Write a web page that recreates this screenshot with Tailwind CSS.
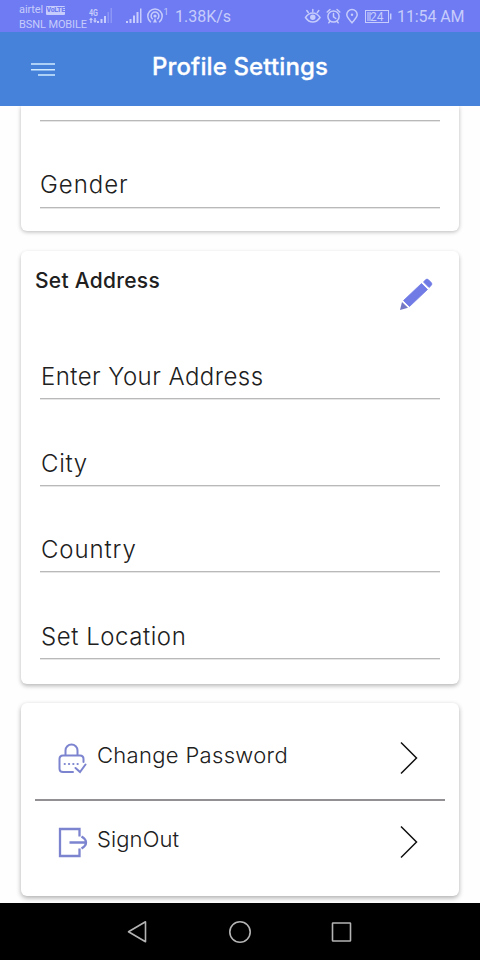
<!DOCTYPE html>
<html lang="en">
<head>
<meta charset="utf-8">
<title>Profile Settings</title>
<script src="https://cdn.jsdelivr.net/npm/@tailwindcss/browser@4"></script>
</head>
<body class="bg-white">
<div class="flex h-[960px] w-[480px] flex-col overflow-hidden bg-[#fefefe] font-['Inter',sans-serif] text-[#202020]">
  <div class="flex h-8 shrink-0 bg-[#6e7bf2] pl-[19px] font-['Roboto',sans-serif] text-[#c6ccfb]">
    <div class="w-[69px] shrink-0 pt-[2px] text-[11px] leading-[15px] whitespace-nowrap">
      <div class="flex items-center gap-[3px] tracking-[-0.1px]">airtel <span class="mt-px flex h-[9px] w-[19px] items-center justify-center rounded-[1px] bg-[#c6ccfb] text-[7px] font-black tracking-[-0.3px] text-[#6e7bf2]">VoLTE</span></div>
      <div class="tracking-[-0.1px]">BSNL MOBILE</div>
    </div>
    <svg class="h-8 w-[82px] shrink-0" viewBox="88 0 82 32" fill="#c6ccfb">
      <text x="89" y="15.500" font-size="9" font-weight="700" textLength="9" lengthAdjust="spacingAndGlyphs">4G</text>
      <path d="M89 20l2-2.500 2 2.500h-1.300v3h-1.400v-3zM93 20.500h1.300v-2.500h1.400v2.500h1.300l-2 2.500zM97 21h2v2h-2zM100.500 19h2v4h-2zM104 16h2v7h-2z"/>
      <path d="M107.500 12h1.500v11h-1.500zM110.500 8h1.500v15h-1.500z" opacity=".35"/>
      <path d="M126 21h2v2h-2zM129.500 19h2v4h-2zM133 15.500h2v7.500h-2zM136.500 12h2v11h-2zM140 8.500h1.500v14.500h-1.500z"/>
      <g fill="none" stroke="#c6ccfb" stroke-width="1.500" stroke-linecap="round"><path d="M150.500 21.800a7.200 7.200 0 1 1 9 0M152.300 18.800a3.900 3.900 0 1 1 5.400 0"/></g>
      <circle cx="155" cy="16" r="1.600"/><path d="M153 22.500l2-4.500 2 4.500z"/>
      <text x="163.500" y="15" font-size="9">1</text>
    </svg>
    <div class="ml-[5px] w-[60px] pt-px text-[16px] leading-8 whitespace-nowrap">1.38K/s</div>
    <svg class="ml-[69px] h-8 w-[88px] shrink-0" viewBox="304 0 88 32" fill="none" stroke="#c6ccfb" stroke-width="1.500" stroke-linecap="round">
      <path d="M305.500 17.500c4-6 10.500-6 14.500 0-4 6-10.500 6-14.500 0zM312.800 11.500v-2M308.300 12.500l-1.500-2M317.300 12.500l1.500-2"/><circle cx="312.800" cy="17.300" r="2" fill="#c6ccfb"/>
      <circle cx="333.500" cy="16.500" r="5.600"/><path d="M333.500 13.500v3.300l2.300 1.700M327.200 12l2.800-2.500M339.800 12l-2.800-2.500M330 21.300l-1.200 1.500M337 21.300l1.200 1.500"/>
      <path d="M352 22.800c-2.500-3-5.200-5.200-5.200-8.200a5.200 5.200 0 0 1 10.400 0c0 3-2.700 5.200-5.200 8.200z"/><circle cx="352" cy="14.800" r="1.200" fill="#c6ccfb" stroke="none"/>
      <rect x="365.500" y="10.500" width="23" height="12" stroke-width="1"/><path d="M390.700 13.500v6" stroke-linecap="butt"/>
      <path d="M367 12h4v9h-4z" fill="#c6ccfb" stroke="none" opacity=".6"/><text x="370" y="20.500" font-size="12" textLength="13.500" fill="#c6ccfb" stroke="none">24</text>
    </svg>
    <div class="ml-[5px] pt-px text-[16px] leading-8 tracking-[-0.1px] whitespace-nowrap">11:54 AM</div>
  </div>

  <header class="grid h-[74px] shrink-0 grid-cols-[80px_1fr_80px] items-center bg-[#4682da]">
    <svg class="mt-px ml-[30px] h-[15px] w-[26px]" viewBox="0 0 26 15" stroke="#cfeaff" stroke-width="1.500"><path d="M1 2h24M1 7.800h24M8 13h17"/></svg>
    <h1 class="-mt-[5px] text-center text-[24px] leading-8 font-medium tracking-[0.12px] whitespace-nowrap text-white [-webkit-text-stroke:0.300px_white]">Profile Settings</h1>
  </header>

  <main class="flex min-h-0 flex-1 flex-col overflow-hidden px-[21px]">
    <section class="flex h-[125px] shrink-0 flex-col rounded-b-[6px] bg-white px-[19px] shadow-[0_1px_4px_rgba(0,0,0,0.28)]">
      <div class="h-[15px] border-b border-[#b9b9b9] shadow-[0_1px_0_#e6e6e6]"></div>
      <div class="flex h-[87px] items-end border-b border-[#b9b9b9] pb-[6px] text-[24px] leading-8 font-light tracking-[0.95px] shadow-[0_1px_0_#e6e6e6]">Gender</div>
    </section>

    <section class="mt-5 flex h-[433px] shrink-0 flex-col rounded-[6px] bg-white px-[19px] shadow-[0_2px_4px_rgba(0,0,0,0.28)]">
      <div class="-ml-[5px] flex h-[62px] items-start justify-between">
        <h2 class="pt-[16px] text-[21px] leading-7 font-medium tracking-[0.27px] whitespace-nowrap">Set Address</h2>
        <svg class="mt-[26px] mr-[7px] h-[34px] w-[34px]" viewBox="0 0 34 34" fill="#717be5"><path stroke="#717be5" stroke-width=".8" d="M22.500 6.500l6 6L10.500 29.500l-6-6zM24.500 5l2-2.200q1.500-1.500 3 0l2.700 2.700q1.500 1.500 0 3L30 10.500z"/><path d="M3 25l6 5.700L1 33z" fill="#7478c5"/></svg>
      </div>
      <div class="flex h-[86px] items-end border-b border-[#b9b9b9] pb-[5px] pl-px text-[24px] leading-8 font-light tracking-[0.45px] shadow-[0_1px_0_#e6e6e6]">Enter Your Address</div>
      <div class="flex h-[87px] items-end border-b border-[#b9b9b9] pb-[5px] pl-px text-[24px] leading-8 font-light tracking-[0.7px] shadow-[0_1px_0_#e6e6e6]">City</div>
      <div class="flex h-[86px] items-end border-b border-[#b9b9b9] pb-[5px] pl-px text-[24px] leading-8 font-light tracking-[0.9px] shadow-[0_1px_0_#e6e6e6]">Country</div>
      <div class="flex h-[87px] items-end border-b border-[#b9b9b9] pb-[5px] pl-px text-[24px] leading-8 font-light tracking-[0.55px] shadow-[0_1px_0_#e6e6e6]">Set Location</div>
    </section>

    <section class="mt-[19px] flex h-[193px] shrink-0 flex-col rounded-[6px] bg-white px-[14px] shadow-[0_2px_5px_rgba(0,0,0,0.32)]">
      <div class="flex h-[98px] items-center border-b-2 border-[#929092] pt-[13px] pr-[26px] pl-[22px]">
        <svg class="h-8 w-8 shrink-0" viewBox="0 0 32 32" fill="none" stroke="#7c84cf" stroke-width="2" stroke-linecap="round"><path d="M8.500 13V8.500a6 6 0 0 1 12 0V13M16 30H6q-3.500 0-3.500-3.500V17q0-3.500 3.500-3.500h17q3.500 0 3.500 3.500v3M18.500 26l4.500 4 5.500-7.500"/><path d="M7.700 22h.1M12 22h.1M16.300 22h.1M20.600 22h.1" stroke-width="2.200"/></svg>
        <span class="-mt-[5px] ml-[8px] flex-1 text-[22px] leading-8 font-light tracking-[0.32px] whitespace-nowrap">Change Password</span>
        <svg class="h-[34px] w-[20px]" viewBox="0 0 20 34" fill="none" stroke="#111" stroke-width="1.500"><path d="M2 1.500L17.500 17 2 32.500"/></svg>
      </div>
      <div class="flex h-[82px] items-center pr-[26px] pl-[22px]">
        <svg class="h-8 w-8 shrink-0" viewBox="0 0 32 32" fill="none" stroke="#7c84cf" stroke-width="2.300"><path d="M22.500 10.500V3H3v27h19.500v-7.500M12.500 16.500H28M24.500 10.500q4.500 2.500 4.500 6t-4.500 6"/></svg>
        <span class="-mt-[6px] ml-[8px] flex-1 text-[22px] leading-8 font-light tracking-[0.1px] whitespace-nowrap">SignOut</span>
        <svg class="h-[34px] w-[20px]" viewBox="0 0 20 34" fill="none" stroke="#111" stroke-width="1.500"><path d="M2 1.500L17.500 17 2 32.500"/></svg>
      </div>
    </section>
  </main>

  <nav class="flex h-[57px] shrink-0 items-center bg-black pl-[127px]">
    <svg class="h-6 w-[226px]" viewBox="0 0 226 24" fill="none" stroke="#b4b4b4" stroke-width="1.600" stroke-linejoin="round"><path d="M18.500 1.800v20L1.500 11.800z"/><circle cx="113" cy="12" r="10.200"/><rect x="205.500" y="3" width="18" height="18" rx=".5"/></svg>
  </nav>
</div>
</body>
</html>
